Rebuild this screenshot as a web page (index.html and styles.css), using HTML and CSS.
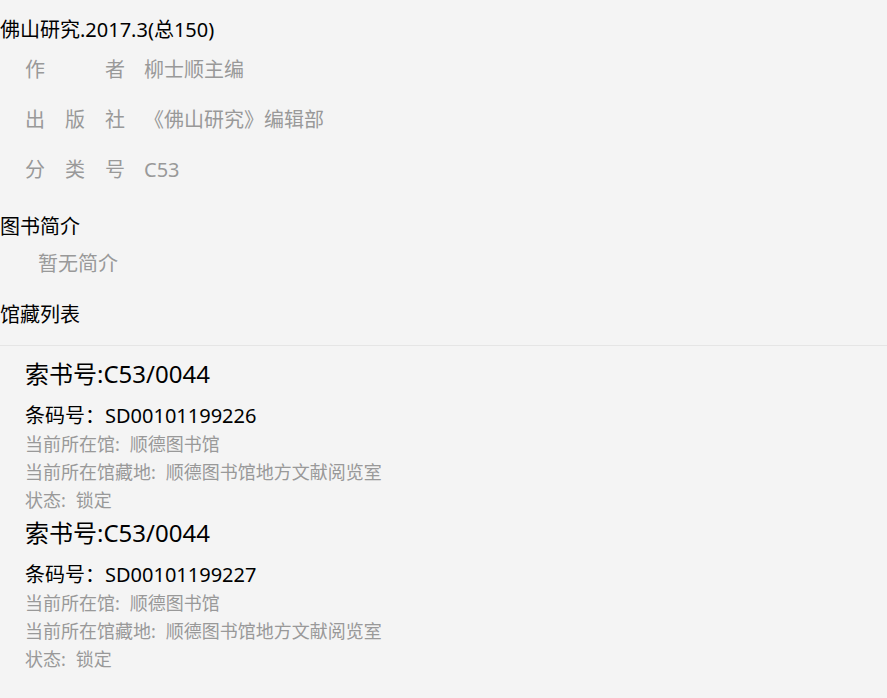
FILE: index.html
```html
<!DOCTYPE html>
<html lang="zh-CN">
<head>
    <meta charset="UTF-8">
    <meta name="viewport" content="width=device-width, initial-scale=1.0">
    <title>图书详情</title>
    <link rel="stylesheet" href="styles.css">
</head>
<body>
    <h1 class="book-title">佛山研究.2017.3(总150)</h1>

    <ul class="info">
        <li><span class="info-label">作者</span><span class="info-value">柳士顺主编</span></li>
        <li><span class="info-label">出版社</span><span class="info-value">《佛山研究》编辑部</span></li>
        <li><span class="info-label">分类号</span><span class="info-value">C53</span></li>
    </ul>

    <h2 class="section-title">图书简介</h2>
    <p class="summary">暂无简介</p>

    <h2 class="section-title collection-title">馆藏列表</h2>

    <!-- 馆藏列表 -->
    <div class="collection">
        <div class="item">
            <h3 class="call-no">索书号:C53/0044</h3>
            <p class="barcode">条码号：SD00101199226</p>
            <p class="meta"><span>当前所在馆:</span><span class="meta-value">顺德图书馆</span></p>
            <p class="meta"><span>当前所在馆藏地:</span><span class="meta-value">顺德图书馆地方文献阅览室</span></p>
            <p class="meta"><span>状态:</span><span class="meta-value">锁定</span></p>
        </div>
        <div class="item">
            <h3 class="call-no">索书号:C53/0044</h3>
            <p class="barcode">条码号：SD00101199227</p>
            <p class="meta"><span>当前所在馆:</span><span class="meta-value">顺德图书馆</span></p>
            <p class="meta"><span>当前所在馆藏地:</span><span class="meta-value">顺德图书馆地方文献阅览室</span></p>
            <p class="meta"><span>状态:</span><span class="meta-value">锁定</span></p>
        </div>
    </div>
</body>
</html>
```

FILE: styles.css
```css
body {
    font-family: "Noto Sans", "Noto Sans CJK SC", sans-serif;
    background-color: #f4f4f4;
    color: #000;
    margin: 0;
}

h1, h2, h3, p, ul {
    margin: 0;
    padding: 0;
    font-weight: normal;
}

.book-title {
    font-size: 20px;
    line-height: 30px;
    margin-top: 15px;
}

.info {
    list-style: none;
    padding-left: 25px;
    color: #999;
    font-size: 20px;
}

.info li {
    display: flex;
    line-height: 50px;
}

.info-label {
    width: 100px;
    text-align: justify;
    text-align-last: justify;
    margin-right: 19px;
}

.section-title {
    font-size: 20px;
    line-height: 30px;
    margin-top: 17px;
}

.summary {
    font-size: 20px;
    line-height: 30px;
    color: #999;
    padding-left: 38px;
    margin-top: 7px;
}

.collection-title {
    margin-top: 21px;
}

.collection {
    margin-top: 15px;
    border-top: 1px solid #e5e5e5;
    padding: 10px 25px;
}

.call-no {
    font-size: 24px;
    line-height: 36px;
}

.barcode {
    font-size: 20px;
    line-height: 28px;
    margin-top: 10px;
}

.meta {
    font-size: 18px;
    line-height: 28.2px;
    color: #999;
}

.meta-value {
    margin-left: 10px;
}
```
